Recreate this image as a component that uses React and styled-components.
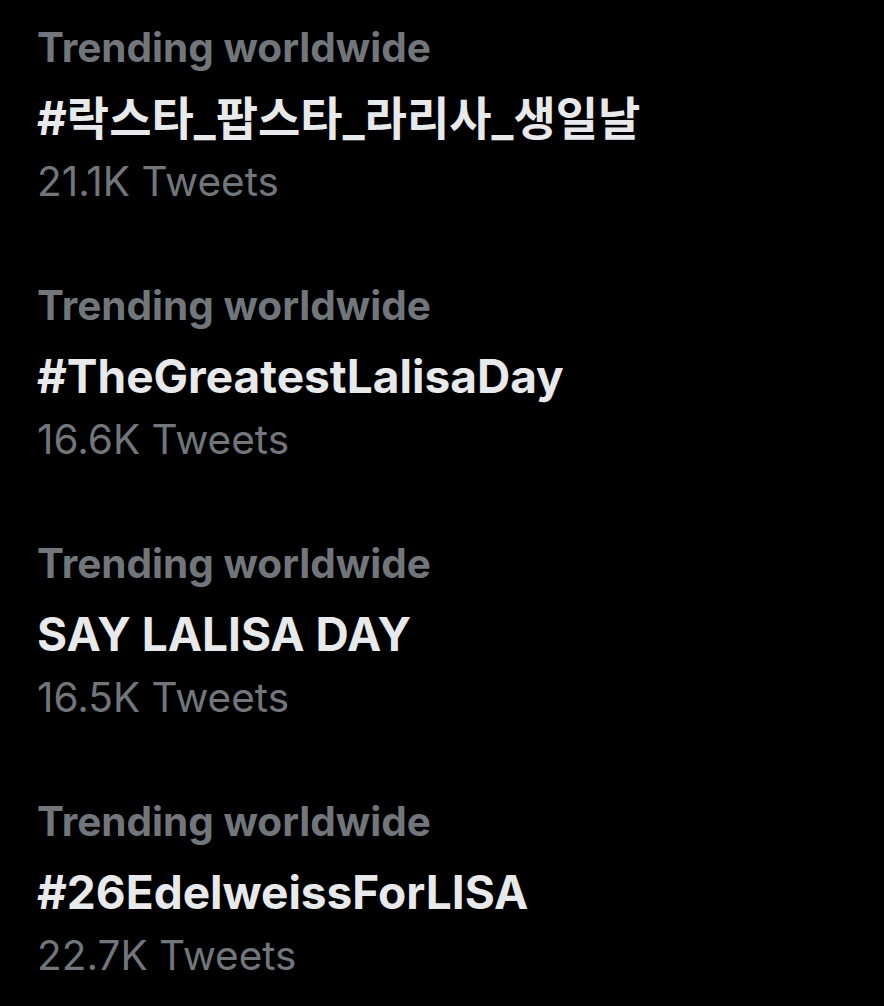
import React from "react";
import styled, { createGlobalStyle } from "styled-components";

const GlobalStyle = createGlobalStyle`
  html, body {
    margin: 0;
    padding: 0;
    background: #000;
  }
  body {
    font-family: Inter, "Noto Sans CJK KR", sans-serif;
  }
`;

const TrendList = styled.div`
  width: 884px;
  height: 1006px;
  background: #000;
  padding: 16px 37px 0;
  box-sizing: border-box;
  display: flex;
  flex-direction: column;
  gap: 66px;
  overflow: hidden;
`;

const TrendItem = styled.div`
  display: flex;
  flex-direction: column;
`;

const Context = styled.div`
  font-size: 40.5px;
  line-height: 64px;
  font-weight: 700;
  color: #71767b;
  white-space: nowrap;
`;

const Title = styled.div`
  font-size: 46px;
  line-height: 76px;
  font-weight: 700;
  color: #e7e9ea;
  white-space: nowrap;
`;

const Count = styled.div`
  font-size: 40.5px;
  line-height: 52px;
  font-weight: 400;
  color: #71767b;
  white-space: nowrap;
`;

const trends = [
  { title: "#락스타_팝스타_라리사_생일날", count: "21.1K Tweets" },
  { title: "#TheGreatestLalisaDay", count: "16.6K Tweets" },
  { title: "SAY LALISA DAY", count: "16.5K Tweets" },
  { title: "#26EdelweissForLISA", count: "22.7K Tweets" },
];

function App() {
  return (
    <>
      <GlobalStyle />
      <TrendList>
        {trends.map((t) => (
          <TrendItem key={t.title}>
            <Context>Trending worldwide</Context>
            <Title>{t.title}</Title>
            <Count>{t.count}</Count>
          </TrendItem>
        ))}
      </TrendList>
    </>
  );
}

export default App;
